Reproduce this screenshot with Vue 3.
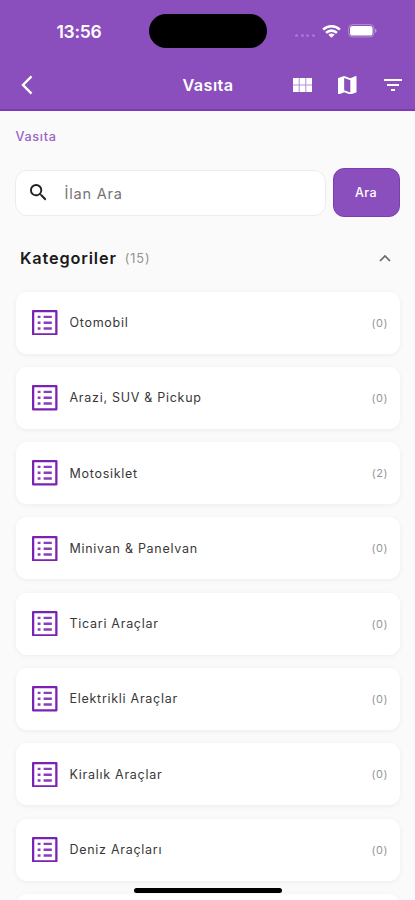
<script setup>
import { ref } from 'vue'

const open = ref(true)
const categories = [
  { name: 'Otomobil', count: 0 },
  { name: 'Arazi, SUV & Pickup', count: 0 },
  { name: 'Motosiklet', count: 2 },
  { name: 'Minivan & Panelvan', count: 0 },
  { name: 'Ticari Araçlar', count: 0 },
  { name: 'Elektrikli Araçlar', count: 0 },
  { name: 'Kiralık Araçlar', count: 0 },
  { name: 'Deniz Araçları', count: 0 },
]
</script>

<template>
  <div class="screen">
    <header class="header">
      <div class="status">
        <span class="time">13:56</span>
        <span class="island"></span>
        <div class="signals">
          <span class="dots"><i></i><i></i><i></i><i></i></span>
          <svg class="wifi" viewBox="0 0 20 15">
            <path d="M1.2 5.6a12.6 12.6 0 0 1 17.6 0M4.3 8.9a8.2 8.2 0 0 1 11.4 0" fill="none" stroke="#fff" stroke-width="2.7" />
            <path d="M10 14.2 6.7 10.9a4.7 4.7 0 0 1 6.6 0z" fill="#fff" />
          </svg>
          <svg class="battery" viewBox="0 0 29 14">
            <rect x=".6" y=".6" width="25.4" height="12.3" rx="4" fill="none" stroke="#fff" stroke-opacity=".35" />
            <rect x="2" y="2" width="22.6" height="9.5" rx="2.6" fill="#fff" />
            <path d="M27.2 4.6c1.8.7 1.8 3.7 0 4.4z" fill="#fff" opacity=".5" />
          </svg>
        </div>
      </div>
      <div class="toolbar">
        <svg class="back" viewBox="0 0 12 20"><path d="M10.5 1.4 2 10l8.5 8.6" /></svg>
        <h1>Vasıta</h1>
        <div class="actions">
          <svg class="grid" viewBox="0 0 19 14">
            <path d="M0 0h19v14H0z" />
            <path class="gridline" d="M6.2 0v14M12.800 0v14M0 7h19" />
          </svg>
          <svg class="map" viewBox="3 3 18 18">
            <path d="m20.5 3-.16.03L15 5.1 9 3 3.36 4.9c-.21.07-.36.25-.36.48V20.5c0 .28.22.5.5.5l.16-.03L9 18.9l6 2.1 5.64-1.9c.21-.07.36-.25.36-.48V3.5c0-.28-.22-.5-.5-.5zM15 19l-6-2.110V5l6 2.110V19z" />
          </svg>
          <svg class="filter" viewBox="3 6 18 12"><path d="M10 18h4v-2h-4v2zM3 6v2h18V6H3zm3 7h12v-2H6v2z" /></svg>
        </div>
      </div>
    </header>

    <main>
      <nav class="crumb">Vasıta</nav>
      <div class="search">
        <div class="field">
          <svg viewBox="3 3 17.5 17.5">
            <path d="M15.5 14h-.79l-.28-.27A6.471 6.471 0 0 0 16 9.500 6.500 6.500 0 1 0 9.500 16c1.610 0 3.090-.59 4.230-1.570l.27.28v.79l5 4.990L20.490 19l-4.990-5zm-6 0C7.010 14 5 11.990 5 9.500S7.010 5 9.500 5 14 7.010 14 9.500 11.990 14 9.500 14z" />
          </svg>
          <span>İlan Ara</span>
        </div>
        <button type="button">Ara</button>
      </div>
      <div class="section" @click="open = !open">
        <h2>Kategoriler</h2>
        <span class="total">(15)</span>
        <svg class="chevron" viewBox="0 0 12 8"><path d="m1 7 5-5 5 5" /></svg>
      </div>
      <ul v-if="open">
        <li v-for="c in categories" :key="c.name">
          <svg class="list" viewBox="3 3 18 18">
            <path d="M19.400 4.600v14.800H4.600V4.600h14.800M20.100 3H3.900c-.5 0-.9.400-.9.900v16.200c0 .4.400.9.900.9h16.200c.4 0 .9-.5.900-.9V3.900c0-.5-.5-.9-.9-.9z" />
            <path class="rows" d="M11.200 7H17v1.700h-5.800zM11.200 11.100H17v1.700h-5.800zM11.200 15.200H17v1.700h-5.800zM7 7h2v1.700H7zM7 11.100h2v1.700H7zM7 15.200h2v1.700H7z" />
          </svg>
          <span class="name">{{ c.name }}</span>
          <span class="count">({{ c.count }})</span>
        </li>
        <li></li>
      </ul>
    </main>
    <div class="home"></div>
  </div>
</template>

<style>
body {
  background: #fafafa;
}
</style>

<style scoped>
.screen {
  position: relative;
  width: 415px;
  height: 900px;
  overflow: hidden;
  background: #fafafa;
  color: #222;
  font-family: Inter, sans-serif;
}
.header {
  box-sizing: border-box;
  height: 111px;
  background: #8a4fbc;
  border-bottom: 2px solid #7c3bb3;
  color: #fff;
}
.status {
  display: grid;
  grid-template-columns: 149px 118px 1fr;
  align-items: center;
  height: 62px;
}
.time {
  padding-left: 56.500px;
  font-size: 17.500px;
  font-weight: 600;
  letter-spacing: -0.3px;
}
.island {
  height: 34px;
  border-radius: 17px;
  background: #000;
}
.signals {
  display: flex;
  align-items: center;
  padding-left: 28px;
}
.dots {
  display: flex;
  gap: 2.600px;
  width: 21px;
  padding-top: 9px;
}
.dots i {
  width: 3px;
  height: 3px;
  border-radius: 50%;
  background: #a678cf;
}
.wifi {
  width: 19px;
  height: 15px;
  margin-left: 6px;
}
.battery {
  width: 29px;
  height: 14px;
  margin-left: 7px;
}
.toolbar {
  display: grid;
  grid-template-columns: 1fr auto 1fr;
  align-items: center;
  height: 46px;
}
.back {
  width: 12px;
  height: 20px;
  margin-left: 21px;
  fill: none;
  stroke: #fff;
  stroke-width: 2.400;
}
h1 {
  margin: 0 0 0 1px;
  font-size: 16.300px;
  font-weight: 600;
  letter-spacing: 0.4px;
}
.actions {
  display: flex;
  align-items: center;
  justify-content: flex-end;
  padding-right: 13.500px;
  fill: #fff;
}
.grid {
  width: 19px;
  height: 14px;
}
.gridline {
  stroke: #b28cd5;
  stroke-width: 1;
}
.map {
  width: 18.500px;
  height: 18.500px;
  margin-left: 26px;
}
.filter {
  width: 18px;
  height: 12px;
  margin-left: 27px;
}
main {
  padding: 0 15.500px;
}
.crumb {
  padding-top: 17px;
  height: 40px;
  font-size: 12.700px;
  line-height: 17px;
  font-weight: 500;
  letter-spacing: 0.65px;
  color: #9a62c8;
}
.search {
  display: flex;
  align-items: center;
  gap: 7px;
  height: 49px;
}
.field {
  box-sizing: border-box;
  display: flex;
  flex: 1;
  align-items: center;
  gap: 18.500px;
  height: 46px;
  margin-left: -0.5px;
  padding-left: 13.500px;
  border: 1.500px solid #ececec;
  border-radius: 12px;
  background: #fff;
  font-size: 14.500px;
  letter-spacing: 0.8px;
  color: #757575;
}
.field svg {
  width: 16.500px;
  height: 16.500px;
  fill: #202020;
}
.field span {
  padding-top: 1px;
}
button {
  width: 67px;
  height: 49px;
  padding: 0;
  border: 1px solid #7d3cb6;
  border-radius: 11px;
  background: #8a4fbc;
  color: #fff;
  font: 500 12.500px Inter, sans-serif;
  letter-spacing: 0.4px;
}
.section {
  display: flex;
  align-items: center;
  box-sizing: border-box;
  height: 74.500px;
  padding: 8px 9px 0 4.500px;
}
h2 {
  margin: 0;
  font-size: 16.300px;
  font-weight: 600;
  letter-spacing: 0.85px;
  color: #1a1a1a;
}
.total {
  margin-left: 8px;
  font-size: 12.700px;
  letter-spacing: 0.9px;
  color: #929292;
}
.chevron {
  width: 12px;
  height: 8px;
  margin-left: auto;
  fill: none;
  stroke: #666;
  stroke-width: 1.700;
}
ul {
  display: flex;
  flex-direction: column;
  gap: 13.300px;
  margin: 0;
  padding: 0;
  list-style: none;
}
li {
  box-sizing: border-box;
  display: flex;
  align-items: center;
  height: 62px;
  padding: 0 11.500px 0 16.500px;
  border-radius: 11px;
  background: #fff;
  box-shadow: 0 1px 5px rgba(0, 0, 0, 0.06);
}
.list {
  width: 25.500px;
  height: 25.500px;
  fill: #7a22b4;
}
.rows {
  fill: #8a3dbd;
}
.name {
  margin-left: 12px;
  font-size: 12.500px;
  letter-spacing: 0.72px;
  color: #383838;
}
.count {
  margin-left: auto;
  font-size: 11px;
  letter-spacing: 0.5px;
  color: #969696;
}
.home {
  position: absolute;
  bottom: 7px;
  left: 134px;
  width: 148px;
  height: 5px;
  border-radius: 3px;
  background: #000;
}
</style>
